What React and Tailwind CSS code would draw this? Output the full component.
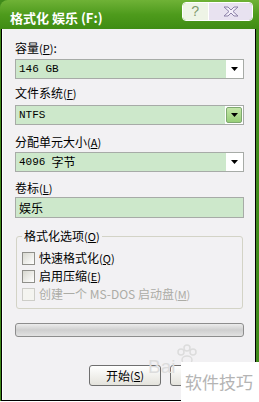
import React from "react";

const cjk = { fontFamily: '"Noto Sans CJK SC", "Liberation Sans", sans-serif' };
const mono = { fontFamily: '"Liberation Mono", "Noto Sans CJK SC", monospace' };

function Key({ k }) {
    return (
        <span className="text-[11px]">
            (<u>{k}</u>)
        </span>
    );
}

function Arrow() {
    return (
        <svg width="7" height="4" viewBox="0 0 7 4">
            <path d="M0 0h7L3.5 4z" fill="#000" />
        </svg>
    );
}

function Select({ children, green }) {
    return (
        <div className="flex h-[20px] border border-[#a7aba7] bg-white">
            <div className="flex flex-1 items-center bg-[#cde8cb] pl-[3px] text-[12px] leading-none">
                {children}
            </div>
            {green ? (
                <div className="m-[1px] flex w-[16px] items-center justify-center rounded-[2px] border border-[#7fa870] bg-gradient-to-b from-[#c4e6a8] to-[#98cf78]">
                    <Arrow />
                </div>
            ) : (
                <div className="flex w-[17px] items-center justify-center">
                    <Arrow />
                </div>
            )}
        </div>
    );
}

function Check({ label, k, disabled }) {
    return (
        <div className="flex h-[18px] items-center gap-[4px] pl-[5px]">
            <span
                className={
                    disabled
                        ? "h-[13px] w-[13px] border border-[#cdcdc8] bg-[#f4f4f0]"
                        : "h-[13px] w-[13px] border border-[#8f8f8a] bg-gradient-to-br from-[#d8d8d0] to-white"
                }
            />
            <span className={disabled ? "text-[12px] text-[#acaca6]" : "text-[12px]"}>
                {label}
                <Key k={k} />
            </span>
        </div>
    );
}

export default function App() {
    return (
        <div className="relative flex h-[402px] w-[259px] flex-col overflow-hidden bg-[#3f8a1a]" style={cjk}>
            {/* title bar */}
            <div className="flex h-[29px] shrink-0 rounded-tl-[8px] bg-gradient-to-b from-[#6fb236] via-[#4e9b1c] to-[#3f8c14] pl-[10px] pr-[6px]">
                <div className="pt-[11px] text-[13px] font-bold leading-[13px] text-white">格式化 娱乐 (F:)</div>
                <div className="ml-auto mt-[2px] flex h-[19px] overflow-hidden rounded-[4px] border border-white">
                    <div className="flex w-[26px] items-center justify-center border-r border-white bg-[#eef4e6] text-[14px] leading-none text-[#7d9a6c]" style={mono}>
                        ?
                    </div>
                    <div className="flex w-[43px] items-center justify-center bg-[#e8e2f0]">
                        <svg width="16" height="11" viewBox="0 0 16 11">
                            <path
                                d="M1 1h4l3 3 3-3h4l-5 4.5 5 4.5h-4l-3-3-3 3H1l5-4.5z"
                                fill="#f4f0fa"
                                stroke="#8c80a8"
                                strokeWidth="1"
                            />
                        </svg>
                    </div>
                </div>
            </div>

            {/* body */}
            <div className="ml-[1px] mr-[3px] flex flex-1 flex-col border-x border-b border-black">
                <div className="flex flex-1 flex-col border-l border-white bg-[#f2f1f3] pl-[12px] pr-[11px] text-black">
                    <div className="mt-[11px] h-[16px] text-[12px] leading-[16px]">
                        容量<Key k="P" />:
                    </div>
                    <div className="mt-[3px]">
                        <Select>
                            <span style={mono} className="text-[11px]">146 GB</span>
                        </Select>
                    </div>

                    <div className="mt-[6px] h-[16px] text-[12px] leading-[16px]">
                        文件系统<Key k="F" />
                    </div>
                    <div className="mt-[4px]">
                        <Select green>
                            <span style={mono} className="text-[11px]">NTFS</span>
                        </Select>
                    </div>

                    <div className="mt-[9px] h-[16px] text-[12px] leading-[16px]">
                        分配单元大小<Key k="A" />
                    </div>
                    <div className="mt-[2px]">
                        <Select>
                            <span style={mono} className="text-[11px]">4096</span>
                            <span className="ml-[6px]">字节</span>
                        </Select>
                    </div>

                    <div className="mt-[8px] h-[16px] text-[12px] leading-[16px]">
                        卷标<Key k="L" />
                    </div>
                    <div className="mt-[1px] flex h-[21px] items-center border border-[#a7aba7] bg-[#cde8cb] pl-[3px] text-[12px]">
                        娱乐
                    </div>

                    <fieldset className="mx-[1px] mt-[10px] rounded-[3px] border border-[#d3d3c6] pb-[5px] pt-[5px]">
                        <legend className="ml-[5px] h-[16px] px-[2px] text-[12px] leading-[16px]">
                            格式化选项<Key k="O" />
                        </legend>
                        <Check label="快速格式化" k="Q" />
                        <Check label="启用压缩" k="E" />
                        <Check label="创建一个 MS-DOS 启动盘" k="M" disabled />
                    </fieldset>

                    <div className="mt-[14px] h-[14px] rounded-[3px] border border-[#8d8d8d] bg-gradient-to-b from-[#ececec] via-[#cfcfcf] to-[#e2e2e2]" />

                    <div className="mt-[28px] flex gap-[9px] pl-[74px]">
                        <div className="flex h-[21px] w-[72px] items-center justify-center rounded-[3px] border border-[#6f6f6f] bg-gradient-to-b from-white to-[#e4e3dc] text-[12px]">
                            开始<Key k="S" />
                        </div>
                        <div className="h-[21px] w-[72px] rounded-[3px] border border-[#6f6f6f] bg-gradient-to-b from-white to-[#e4e3dc]" />
                    </div>
                </div>
            </div>
            <div className="h-[1px] shrink-0 bg-white" />

            {/* faint baidu watermark */}
            <div className="pointer-events-none absolute left-[148px] top-[344px] flex items-end text-[#dcdcdc]">
                <span className="text-[19px] leading-none" style={{ fontFamily: '"Liberation Sans", sans-serif' }}>
                    Bai
                </span>
                <svg width="24" height="24" viewBox="0 0 24 24" className="mb-[8px]">
                    <circle cx="6" cy="8" r="3" fill="none" stroke="#dcdcdc" strokeWidth="1.5" />
                    <circle cx="12" cy="4" r="3" fill="none" stroke="#dcdcdc" strokeWidth="1.5" />
                    <circle cx="18" cy="8" r="3" fill="none" stroke="#dcdcdc" strokeWidth="1.5" />
                    <ellipse cx="12" cy="16" rx="5" ry="4" fill="none" stroke="#dcdcdc" strokeWidth="1.5" />
                </svg>
            </div>

            {/* site watermark */}
            <div className="absolute left-[181px] top-[362px] flex h-[40px] w-[78px] items-center bg-white pl-[4px] text-[17px] text-[#b4b4b4]">
                软件技巧
            </div>
        </div>
    );
}
